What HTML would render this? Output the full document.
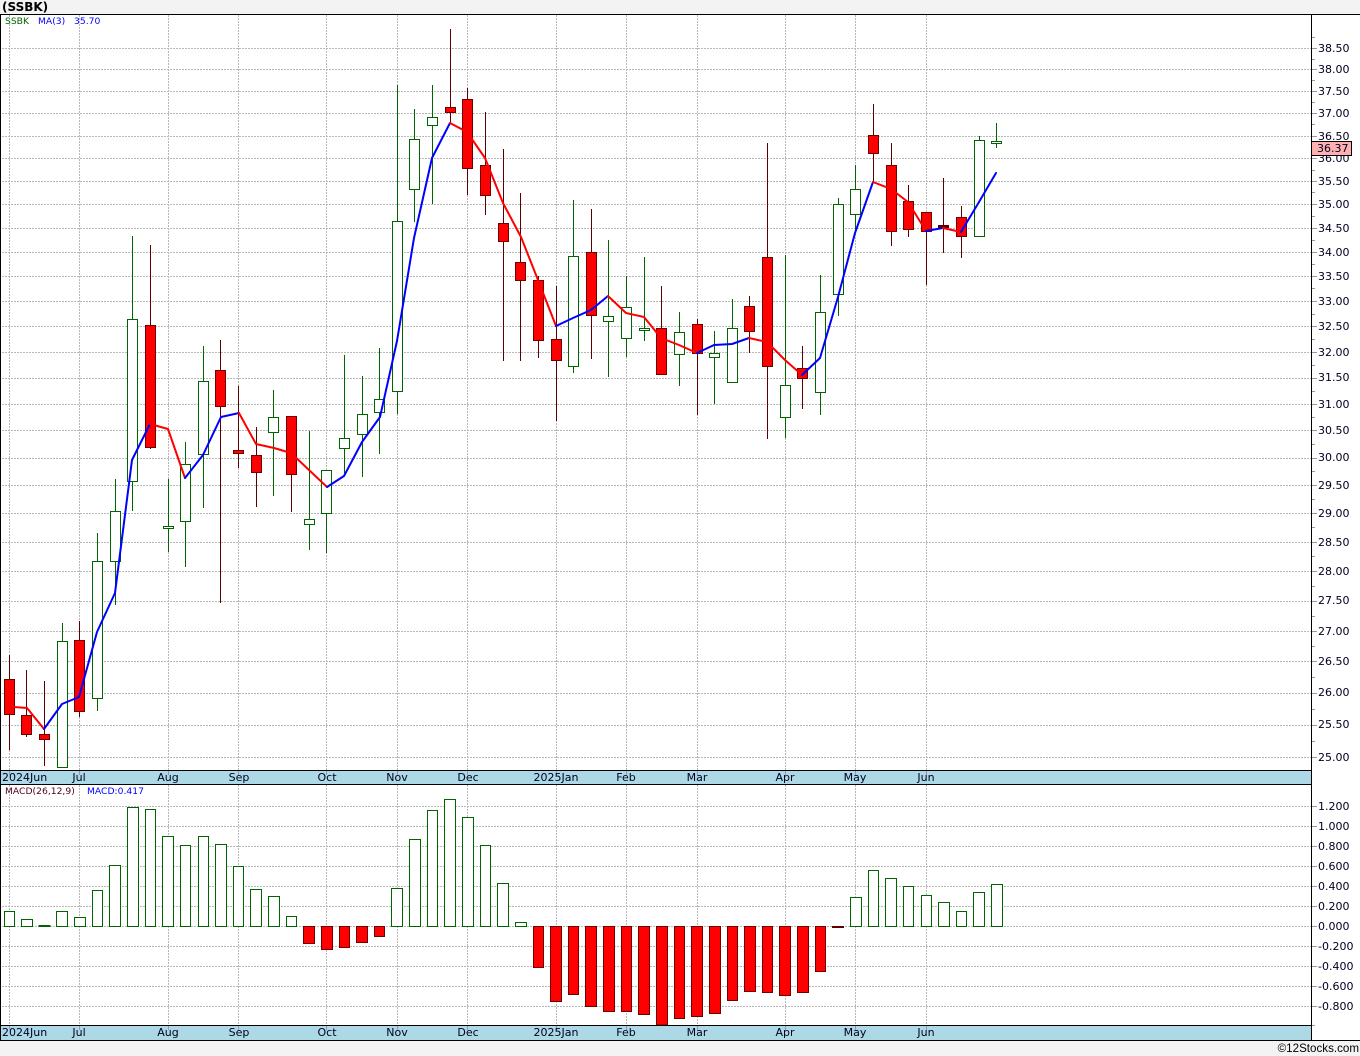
<!DOCTYPE html>
<html>
<head>
<meta charset="utf-8">
<title>SSBK</title>
<style>
html,body{margin:0;padding:0;background:#f3f3f3;}
svg{display:block;}
text{font-family:"DejaVu Sans","Liberation Sans",sans-serif;font-size:11px;fill:#000020;}
.sm{font-size:9.2px;}
.g line,.g path{shape-rendering:crispEdges;}
</style>
</head>
<body>
<svg xmlns="http://www.w3.org/2000/svg" width="1360" height="1056" viewBox="0 0 1360 1056">
<rect x="0" y="0" width="1360" height="1056" fill="#f3f3f3"/>
<rect x="0" y="14" width="1360" height="1026" fill="#fff"/>
<rect x="0" y="770" width="1311" height="14" fill="#add8e6"/>
<rect x="0" y="1025" width="1311" height="15" fill="#add8e6"/>

<g class="g">
<!-- horizontal grid -->
<path fill="none" stroke="#b8b8b8" stroke-dasharray="2 1" d="M2 48.5H1311M2 69.5H1311M2 91.5H1311M2 113.5H1311M2 136.5H1311M2 158.5H1311M2 181.5H1311M2 204.5H1311M2 228.5H1311M2 252.5H1311M2 276.5H1311M2 301.5H1311M2 326.5H1311M2 352.5H1311M2 378.5H1311M2 404.5H1311M2 430.5H1311M2 458.5H1311M2 485.5H1311M2 513.5H1311M2 542.5H1311M2 571.5H1311M2 601.5H1311M2 631.5H1311M2 661.5H1311M2 693.5H1311M2 725.5H1311M2 757.5H1311M2 806.5H1311M2 826.5H1311M2 846.5H1311M2 866.5H1311M2 886.5H1311M2 906.5H1311M2 926.5H1311M2 946.5H1311M2 966.5H1311M2 986.5H1311M2 1006.5H1311"/>
<!-- vertical grid -->
<path fill="none" stroke="#b8b8b8" stroke-dasharray="2 1" d="M9.5 15V770M79.5 15V770M168.5 15V770M238.5 15V770M326.5 15V770M397.5 15V770M467.5 15V770M556.5 15V770M626.5 15V770M697.5 15V770M785.5 15V770M855.5 15V770M926.5 15V770M9.5 785V1025M79.5 785V1025M168.5 785V1025M238.5 785V1025M326.5 785V1025M397.5 785V1025M467.5 785V1025M556.5 785V1025M626.5 785V1025M697.5 785V1025M785.5 785V1025M855.5 785V1025M926.5 785V1025"/>
<!-- ticks under the date strip -->
<path fill="none" stroke="#999" d="M9.5 771V775M79.5 771V775M168.5 771V775M238.5 771V775M326.5 771V775M397.5 771V775M467.5 771V775M556.5 771V775M626.5 771V775M697.5 771V775M785.5 771V775M855.5 771V775M926.5 771V775M9.5 1026V1030M79.5 1026V1030M168.5 1026V1030M238.5 1026V1030M326.5 1026V1030M397.5 1026V1030M467.5 1026V1030M556.5 1026V1030M626.5 1026V1030M697.5 1026V1030M785.5 1026V1030M855.5 1026V1030M926.5 1026V1030"/>
<!-- right axis ticks major -->
<path fill="none" stroke="#999" d="M1312 48.5H1317M1312 69.5H1317M1312 91.5H1317M1312 113.5H1317M1312 136.5H1317M1312 158.5H1317M1312 181.5H1317M1312 204.5H1317M1312 228.5H1317M1312 252.5H1317M1312 276.5H1317M1312 301.5H1317M1312 326.5H1317M1312 352.5H1317M1312 378.5H1317M1312 404.5H1317M1312 430.5H1317M1312 458.5H1317M1312 485.5H1317M1312 513.5H1317M1312 542.5H1317M1312 571.5H1317M1312 601.5H1317M1312 631.5H1317M1312 661.5H1317M1312 693.5H1317M1312 725.5H1317M1312 757.5H1317M1312 806.5H1317M1312 826.5H1317M1312 846.5H1317M1312 866.5H1317M1312 886.5H1317M1312 906.5H1317M1312 926.5H1317M1312 946.5H1317M1312 966.5H1317M1312 986.5H1317M1312 1006.5H1317M1312 1025.5H1315"/>
<!-- right axis ticks minor -->
<path fill="none" stroke="#999" d="M1312 37.5H1315M1312 59.5H1315M1312 80.5H1315M1312 102.5H1315M1312 124.5H1315M1312 147.5H1315M1312 170.5H1315M1312 192.5H1315M1312 216.5H1315M1312 240.5H1315M1312 264.5H1315M1312 288.5H1315M1312 314.5H1315M1312 339.5H1315M1312 365.5H1315M1312 391.5H1315M1312 417.5H1315M1312 444.5H1315M1312 471.5H1315M1312 499.5H1315M1312 527.5H1315M1312 556.5H1315M1312 586.5H1315M1312 616.5H1315M1312 646.5H1315M1312 677.5H1315M1312 709.5H1315M1312 741.5H1315"/>

<!-- green wicks -->
<path fill="none" stroke="#006400" d="M62.5 623V768M97.5 533V711M115.5 479V605M132.5 236V511M168.5 479V552M185.5 442V567M203.5 346V508M273.5 390V496M309.5 431V550M326.5 470V553M344.5 355V475M362.5 376V477M379.5 348V454M397.5 85V414M414.5 109V222M432.5 85V204M573.5 200V373M608.5 240V377M626.5 276V357M644.5 257V341M679.5 312V386M714.5 331V404M732.5 299V382M785.5 255V438M820.5 275V415M838.5 198V316M855.5 165V233M979.5 136V236M996.5 123V148"/>
<!-- red wicks -->
<path fill="none" stroke="#5a0000" d="M9.5 655V750M26.5 670V737M44.5 681V766M79.5 621V717M150.5 245V449M220.5 340V603M238.5 386V468M256.5 427V507M291.5 416V512M450.5 29V123M467.5 88V195M485.5 112V215M503.5 149V361M520.5 193V361M538.5 276V358M556.5 286V421M591.5 209V359M661.5 286V374M697.5 319V415M749.5 296V353M767.5 143V439M802.5 346V409M873.5 104V182M891.5 143V246M908.5 185V237M926.5 212V285M943.5 178V253M961.5 206V258"/>
<!-- green bodies -->
<path fill="#fff" stroke="#006400" d="M57.5 641.5h10V767.5h-10zM92.5 561.5h10V698.5h-10zM110.5 511.5h10V561.5h-10zM127.5 319.5h10V481.5h-10zM163.5 526.5h10V528.5h-10zM180.5 464.5h10V521.5h-10zM198.5 381.5h10V454.5h-10zM268.5 417.5h10V432.5h-10zM304.5 519.5h10V524.5h-10zM321.5 470.5h10V513.5h-10zM339.5 438.5h10V448.5h-10zM357.5 414.5h10V434.5h-10zM374.5 399.5h10V412.5h-10zM392.5 221.5h10V391.5h-10zM409.5 139.5h10V189.5h-10zM427.5 117.5h10V125.5h-10zM568.5 256.5h10V366.5h-10zM603.5 316.5h10V321.5h-10zM621.5 307.5h10V338.5h-10zM639.5 328.5h10V330.5h-10zM674.5 332.5h10V354.5h-10zM709.5 353.5h10V357.5h-10zM727.5 328.5h10V382.5h-10zM780.5 385.5h10V417.5h-10zM815.5 312.5h10V392.5h-10zM833.5 204.5h10V294.5h-10zM850.5 189.5h10V214.5h-10zM974.5 140.5h10V236.5h-10zM991.5 141.5h10V143.5h-10z"/>
<!-- red bodies -->
<path fill="#f00" stroke="#700000" d="M4.5 679.5h10V714.5h-10zM21.5 715.5h10V734.5h-10zM39.5 734.5h10V739.5h-10zM74.5 640.5h10V711.5h-10zM145.5 325.5h10V447.5h-10zM215.5 370.5h10V406.5h-10zM233.5 450.5h10V453.5h-10zM251.5 455.5h10V472.5h-10zM286.5 416.5h10V474.5h-10zM445.5 107.5h10V112.5h-10zM462.5 99.5h10V168.5h-10zM480.5 165.5h10V195.5h-10zM498.5 223.5h10V241.5h-10zM515.5 262.5h10V280.5h-10zM533.5 280.5h10V340.5h-10zM551.5 339.5h10V360.5h-10zM586.5 252.5h10V315.5h-10zM656.5 328.5h10V374.5h-10zM692.5 324.5h10V353.5h-10zM744.5 306.5h10V331.5h-10zM762.5 257.5h10V366.5h-10zM797.5 368.5h10V378.5h-10zM868.5 135.5h10V153.5h-10zM886.5 165.5h10V231.5h-10zM903.5 201.5h10V229.5h-10zM921.5 212.5h10V231.5h-10zM956.5 217.5h10V236.5h-10z"/>
<path fill="#5a0000" d="M938 225h11v3h-11z"/>

<!-- MACD green bars -->
<path fill="#fff" stroke="#006400" d="M4.5 911.5h10V926.5h-10zM21.5 919.5h11V926.5h-11zM39 925.5h11V926.5h-11zM56.5 911.5h11V926.5h-11zM74.5 917.5h11V926.5h-11zM92.5 890.5h10V926.5h-10zM109.5 865.5h11V926.5h-11zM127.5 807.5h11V926.5h-11zM145.5 809.5h10V926.5h-10zM162.5 836.5h11V926.5h-11zM180.5 845.5h10V926.5h-10zM198.5 836.5h10V926.5h-10zM215.5 844.5h11V926.5h-11zM233.5 866.5h10V926.5h-10zM250.5 889.5h11V926.5h-11zM268.5 896.5h11V926.5h-11zM286.5 916.5h10V926.5h-10zM391.5 888.5h11V926.5h-11zM409.5 839.5h11V926.5h-11zM427.5 810.5h10V926.5h-10zM444.5 799.5h11V926.5h-11zM462.5 817.5h11V926.5h-11zM480.5 845.5h10V926.5h-10zM497.5 883.5h11V926.5h-11zM515.5 922.5h11V926.5h-11zM850.5 897.5h11V926.5h-11zM868.5 870.5h10V926.5h-10zM885.5 878.5h11V926.5h-11zM903.5 886.5h10V926.5h-10zM921.5 895.5h10V926.5h-10zM938.5 902.5h11V926.5h-11zM956.5 911.5h10V926.5h-10zM973.5 892.5h11V926.5h-11zM991.5 884.5h11V926.5h-11z"/>
<!-- MACD red bars -->
<path fill="#f00" stroke="#700000" d="M303.5 926.5h11V943.5h-11zM321.5 926.5h11V949.5h-11zM339.5 926.5h10V947.5h-10zM356.5 926.5h11V942.5h-11zM374.5 926.5h10V936.5h-10zM533.5 926.5h10V967.5h-10zM550.5 926.5h11V1001.5h-11zM568.5 926.5h10V994.5h-10zM585.5 926.5h11V1006.5h-11zM603.5 926.5h11V1011.5h-11zM621.5 926.5h10V1011.5h-10zM638.5 926.5h11V1014.5h-11zM656.5 926.5h11V1025h-11zM674.5 926.5h10V1018.5h-10zM691.5 926.5h11V1016.5h-11zM709.5 926.5h11V1013.5h-11zM727.5 926.5h10V1000.5h-10zM744.5 926.5h11V991.5h-11zM762.5 926.5h10V992.5h-10zM779.5 926.5h11V995.5h-11zM797.5 926.5h11V992.5h-11zM815.5 926.5h10V971.5h-10z"/>
<path fill="#5a0000" d="M832 926h12v2h-12z"/>
</g>

<!-- moving average -->
<g fill="none" stroke-width="2" stroke-linejoin="round" stroke-linecap="round">
<polyline stroke="#f00" points="14,707 27,708 44,729"/>
<polyline stroke="#00f" points="44,729 62,704 79,697 97,632 115,593 132,460 150,424"/>
<polyline stroke="#f00" points="150,424 168,429 185,478"/>
<polyline stroke="#00f" points="185,478 203,455 221,417 239,413"/>
<polyline stroke="#f00" points="239,413 256,444 274,448 291,453 309,470 327,487"/>
<polyline stroke="#00f" points="327,487 344,476 362,442 380,417 397,341 414,238 432,158 450,123"/>
<polyline stroke="#f00" points="450,123 467,132 485,158 503,203 521,237 538,280 556,326"/>
<polyline stroke="#00f" points="556,326 573,318 591,310 608,296"/>
<polyline stroke="#f00" points="608,296 626,313 644,317 661,338 679,345 697,353"/>
<polyline stroke="#00f" points="697,353 714,345 732,344 749,338"/>
<polyline stroke="#f00" points="749,338 767,342 785,360 802,375"/>
<polyline stroke="#00f" points="802,375 820,358 838,297 855,233 873,182"/>
<polyline stroke="#f00" points="873,182 891,189 908,202 926,231"/>
<polyline stroke="#00f" points="926,231 943,228"/>
<polyline stroke="#f00" points="943,228 961,232"/>
<polyline stroke="#00f" points="961,232 979,202 996,173"/>
</g>

<!-- frame -->
<g class="g">
<path fill="none" stroke="#000" d="M0 14.5H1360M0 770.5H1311M0 784.5H1311M0 1025.5H1311M0 1040.5H1360M1311.5 14V1040M.5 14V1041"/>
</g>

<!-- title and legends -->
<text x="2" y="11" style="font-weight:bold;font-size:12px;fill:#000">(SSBK)</text>
<text class="sm" x="5" y="24" style="fill:#006400">SSBK</text>
<text class="sm" x="38" y="24" style="fill:#0000ff">MA(3)</text>
<text class="sm" x="74" y="24" style="fill:#0000ff">35.70</text>
<text class="sm" x="5" y="794" style="fill:#500020">MACD(26,12,9)</text>
<text class="sm" x="87" y="794" style="fill:#0000ff">MACD:0.417</text>

<!-- price axis -->
<g>
<text x="1318" y="52">38.50</text>
<text x="1318" y="73">38.00</text>
<text x="1318" y="95">37.50</text>
<text x="1318" y="117">37.00</text>
<text x="1318" y="140">36.50</text>
<text x="1318" y="162">36.00</text>
<text x="1318" y="185">35.50</text>
<text x="1318" y="208">35.00</text>
<text x="1318" y="232">34.50</text>
<text x="1318" y="256">34.00</text>
<text x="1318" y="280">33.50</text>
<text x="1318" y="305">33.00</text>
<text x="1318" y="330">32.50</text>
<text x="1318" y="356">32.00</text>
<text x="1318" y="381">31.50</text>
<text x="1318" y="408">31.00</text>
<text x="1318" y="434">30.50</text>
<text x="1318" y="461">30.00</text>
<text x="1318" y="489">29.50</text>
<text x="1318" y="517">29.00</text>
<text x="1318" y="546">28.50</text>
<text x="1318" y="575">28.00</text>
<text x="1318" y="604">27.50</text>
<text x="1318" y="635">27.00</text>
<text x="1318" y="665">26.50</text>
<text x="1318" y="696">26.00</text>
<text x="1318" y="728">25.50</text>
<text x="1318" y="761">25.00</text>
</g>
<rect x="1311.5" y="141.5" width="40" height="14" fill="#ffb0b0" stroke="#000" shape-rendering="crispEdges"/>
<text x="1317" y="152">36.37</text>

<!-- MACD axis -->
<g>
<text x="1318" y="810">1.200</text>
<text x="1318" y="830">1.000</text>
<text x="1318" y="850">0.800</text>
<text x="1318" y="870">0.600</text>
<text x="1318" y="890">0.400</text>
<text x="1318" y="910">0.200</text>
<text x="1318" y="930">0.000</text>
<text x="1318" y="950">-0.200</text>
<text x="1318" y="970">-0.400</text>
<text x="1318" y="990">-0.600</text>
<text x="1318" y="1010">-0.800</text>
</g>

<!-- date labels upper -->
<g>
<text x="2" y="781">2024Jun</text>
<text x="79" y="781" text-anchor="middle">Jul</text>
<text x="168" y="781" text-anchor="middle">Aug</text>
<text x="239" y="781" text-anchor="middle">Sep</text>
<text x="327" y="781" text-anchor="middle">Oct</text>
<text x="397" y="781" text-anchor="middle">Nov</text>
<text x="468" y="781" text-anchor="middle">Dec</text>
<text x="556" y="781" text-anchor="middle">2025Jan</text>
<text x="626" y="781" text-anchor="middle">Feb</text>
<text x="697" y="781" text-anchor="middle">Mar</text>
<text x="785" y="781" text-anchor="middle">Apr</text>
<text x="855" y="781" text-anchor="middle">May</text>
<text x="926" y="781" text-anchor="middle">Jun</text>
</g>
<!-- date labels lower -->
<g>
<text x="2" y="1036">2024Jun</text>
<text x="79" y="1036" text-anchor="middle">Jul</text>
<text x="168" y="1036" text-anchor="middle">Aug</text>
<text x="239" y="1036" text-anchor="middle">Sep</text>
<text x="327" y="1036" text-anchor="middle">Oct</text>
<text x="397" y="1036" text-anchor="middle">Nov</text>
<text x="468" y="1036" text-anchor="middle">Dec</text>
<text x="556" y="1036" text-anchor="middle">2025Jan</text>
<text x="626" y="1036" text-anchor="middle">Feb</text>
<text x="697" y="1036" text-anchor="middle">Mar</text>
<text x="785" y="1036" text-anchor="middle">Apr</text>
<text x="855" y="1036" text-anchor="middle">May</text>
<text x="926" y="1036" text-anchor="middle">Jun</text>
</g>

<text x="1359" y="1052" text-anchor="end" style="font-family:'Liberation Sans',sans-serif;font-size:11.6px;fill:#000">©12Stocks.com</text>
</svg>
</body>
</html>
